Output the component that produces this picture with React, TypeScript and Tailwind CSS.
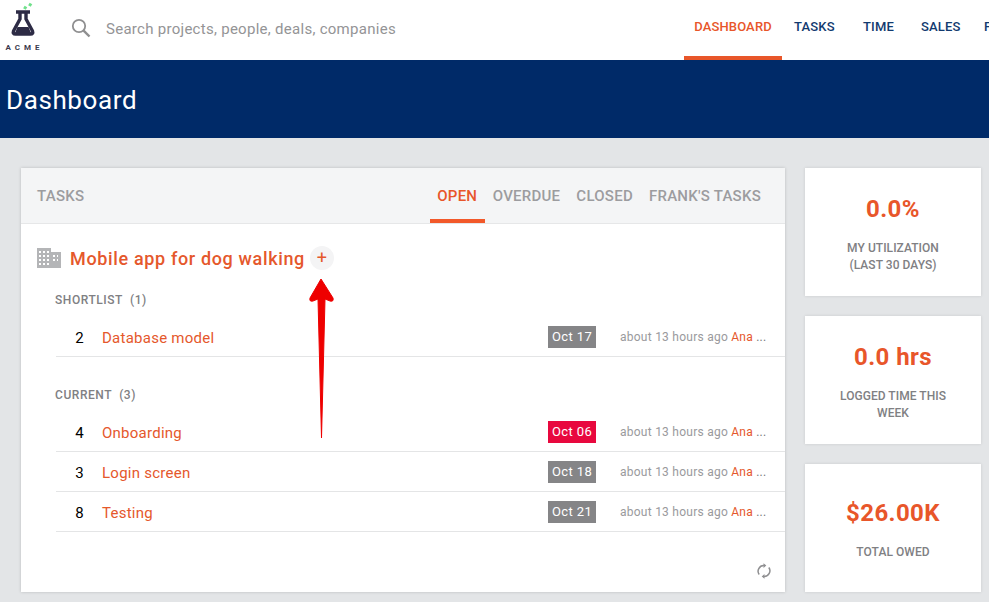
import React from "react";

const font = "font-['Roboto','Liberation_Sans',sans-serif]";

function Logo() {
  return (
    <div className="w-[44px] shrink-0 flex flex-col items-center ml-[1px]">
      <svg width="26" height="36" viewBox="0 0 26 36" className="-mt-[6px]">
        <rect x="14" y="5" width="3" height="3" fill="#6fe08a" transform="rotate(30 15 6)" />
        <rect x="19" y="2" width="3" height="3" fill="#6fe08a" transform="rotate(30 20 3)" />
        <path d="M6 11h14M10 11v7L3.5 30q-1 3 2 3h15q3 0 2-3L16 18v-7" fill="none" stroke="#2d2b45" strokeWidth="3.4" strokeLinejoin="round" />
        <path d="M7.5 26h11l2.5 6H5z" fill="#2d2b45" />
      </svg>
      <span className="text-[8px] leading-[10px] font-bold tracking-[4px] text-[#3b3a4c] mt-[6px] pl-[3px]">ACME</span>
    </div>
  );
}

function Row({ n, title, date, late }: { n: number; title: string; date: string; late?: boolean }) {
  return (
    <div className="h-[40px] ml-[35px] flex items-center border-b border-[#e4e5e6] text-[15px] tracking-[0.25px]">
      <span className="w-[28px] pt-[3px] text-right text-black leading-none">{n}</span>
      <span className="ml-[18px] pt-[3px] flex-1 text-[#e5582c]">{title}</span>
      <span className={`w-[48px] h-[22px] flex items-center justify-center text-[13px] tracking-[0.4px] text-white ${late ? "bg-[#e8083e]" : "bg-[#858587]"}`}>{date}</span>
      <span className="ml-[24px] pt-[1px] w-[165px] text-[12px] tracking-[0.25px] text-[#9a9a9d] whitespace-nowrap">
        about 13 hours ago <span className="text-[#e5582c]">Ana</span> <span className="text-[#77777a]">...</span>
      </span>
    </div>
  );
}

function Stat({ value, label }: { value: string; label: React.ReactNode }) {
  return (
    <div className="h-[128px] pt-[2px] bg-white shadow-[0_0_3px_rgba(0,0,0,0.12)] flex flex-col items-center justify-center">
      <div className="text-[24px] leading-[32px] font-bold tracking-[0.4px] text-[#e8562a]">{value}</div>
      <div className="mt-[15px] text-[12px] leading-[17px] tracking-[0.05px] text-center text-[#808083] w-[130px] font-medium">{label}</div>
    </div>
  );
}

export default function App() {
  return (
    <div className={`relative w-[989px] h-[602px] overflow-hidden bg-[#e3e5e7] ${font}`}>
      <header className="h-[60px] bg-white flex items-center overflow-hidden">
        <Logo />
        <svg width="20" height="20" viewBox="0 0 20 20" fill="none" stroke="#8f8f90" className="shrink-0 ml-[26px] -mt-[4px]">
          <circle cx="8" cy="8" r="6.2" strokeWidth="1.8" />
          <path d="M12.6 12.6 18.5 18.5" strokeWidth="2.4" />
        </svg>
        <span className="ml-[15px] text-[15px] tracking-[0.28px] text-[#949496] w-[578px] shrink-0 -mt-[1px]">Search projects, people, deals, companies</span>
        <nav className="flex h-full shrink-0 text-[13px] font-medium tracking-[0.15px] text-[#123a6f]">
          <a className="w-[98px] h-full flex items-center justify-center border-b-4 border-[#e8562a] text-[#e8562a] pb-[2px]">DASHBOARD</a>
          <a className="ml-[12px] w-[39px] flex items-center pb-[6px]">TASKS</a>
          <a className="ml-[30px] w-[29px] flex items-center pb-[6px]">TIME</a>
          <a className="ml-[29px] w-[40px] flex items-center pb-[6px]">SALES</a>
          <a className="ml-[23px] flex items-center pb-[6px]">F</a>
        </nav>
      </header>

      <div className="h-[78px] bg-[#002a68] flex items-center pl-[6px] pt-[2px] text-[26px] tracking-[0.6px] text-white">Dashboard</div>

      <main className="flex items-start gap-[20px] pl-[21px] pt-[30px]">
        <section className="w-[764px] h-[424px] bg-white shadow-[0_0_3px_rgba(0,0,0,0.18)]">
          <div className="h-[56px] bg-[#f4f5f6] border-b border-[#e6e7e8] flex items-stretch pl-[16px] text-[15px] font-medium tracking-[0.25px] text-[#9c9c9f]">
            <span className="flex-1 flex items-center pt-[2px]">TASKS</span>
            <div className="flex">
              <span className="w-[55px] flex items-center justify-center border-b-4 border-[#f2592a] text-[#e8562a] pt-[6px]">OPEN</span>
              <span className="ml-[8px] flex items-center pt-[2px]">OVERDUE</span>
              <span className="ml-[16px] flex items-center pt-[2px]">CLOSED</span>
              <span className="ml-[16px] mr-[24px] flex items-center pt-[2px]">FRANK'S TASKS</span>
            </div>
          </div>

          <div className="flex items-center pl-[16px] mt-[21px] h-[26px]">
            <svg width="24" height="20" viewBox="0 0 24 20" fill="#b4b5b7">
              <path fillRule="evenodd" d="M0 0h14v4h10v16H0zM2 3v2h2V3zm4 0v2h2V3zm4 0v2h2V3zM2 7v2h2V7zm4 0v2h2V7zm4 0v2h2V7zm6 0v2h2V7zm4 0v2h1V7zM2 11v2h2v-2zm4 0v2h2v-2zm4 0v2h2v-2zm6 0v2h2v-2zm4 0v2h1v-2zM2 15v2h2v-2zm4 0v2h2v-2zm4 0v2h2v-2z" />
            </svg>
            <span className="ml-[9px] text-[18px] font-medium tracking-[0.65px] text-[#e5582c]">Mobile app for dog walking</span>
            <span className="ml-[5px] w-[24px] h-[24px] rounded-full bg-[#f4f4f5] flex items-center justify-center text-[18px] leading-none text-[#e5582c]">+</span>
          </div>

          <div className="ml-[34px] mt-[21px] text-[12px] leading-[16px] font-medium tracking-[0.55px] text-[#808083]">SHORTLIST&nbsp; (1)</div>
          <div className="mt-[9px]">
            <Row n={2} title="Database model" date="Oct 17" />
          </div>

          <div className="ml-[34px] mt-[30px] text-[12px] leading-[16px] font-medium tracking-[0.55px] text-[#808083]">CURRENT&nbsp; (3)</div>
          <div className="mt-[9px]">
            <Row n={4} title="Onboarding" date="Oct 06" late />
            <Row n={3} title="Login screen" date="Oct 18" />
            <Row n={8} title="Testing" date="Oct 21" />
          </div>

          <div className="flex justify-end pr-[14px] mt-[31px]">
            <svg width="14" height="16" viewBox="0 0 14 16" fill="none" stroke="#8f8f91" strokeWidth="1.5">
              <path d="M2.2 11.5A5.6 5.6 0 0 1 7 2.6" />
              <path d="M11.8 4.5A5.6 5.6 0 0 1 7 13.4" />
              <path d="M6.5 0.2 9.3 2.6 6.5 5" fill="#8f8f91" stroke="none" />
              <path d="M7.5 11 4.7 13.4 7.5 15.8" fill="#8f8f91" stroke="none" />
            </svg>
          </div>
        </section>

        <aside className="w-[176px] flex flex-col gap-[20px]">
          <Stat value="0.0%" label={<>MY UTILIZATION<br />(LAST 30 DAYS)</>} />
          <Stat value="0.0 hrs" label={<>LOGGED TIME THIS<br />WEEK</>} />
          <Stat value="$26.00K" label="TOTAL OWED" />
        </aside>
      </main>

      {/* red annotation arrow */}
      <svg className="absolute left-[305px] top-[275px]" width="34" height="168" viewBox="0 0 34 168">
        <path d="M16 4 L5 23 Q4 27 8 26 L13 24 L16.5 163 L20 24 L25 26 Q29 27 28 23 Z" fill="#ee0000" stroke="#ee0000" strokeWidth="1" strokeLinejoin="round" />
      </svg>
    </div>
  );
}
